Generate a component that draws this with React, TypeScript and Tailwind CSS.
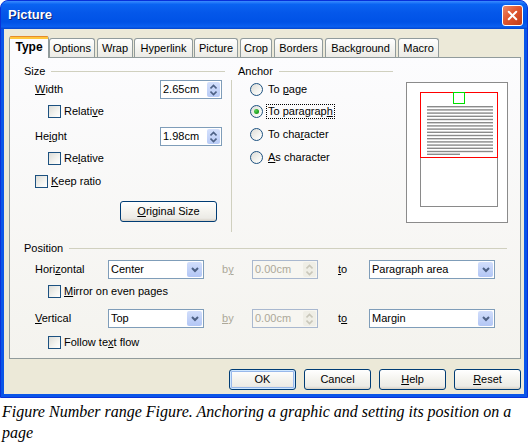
import type { ReactNode } from "react"
import { X } from "lucide-react"

const U = ({ children }: { children: ReactNode }) => <span className="underline underline-offset-[1px]">{children}</span>

function Checkbox({ label }: { label: ReactNode }) {
  return (
    <div className="flex h-[13px] items-center">
      <span className="h-[13px] w-[13px] border border-[#1c5180] bg-[linear-gradient(135deg,#dcdcd7_0%,#f4f4f0_60%,#ffffff_100%)]" />
      <span className="ml-[3px] leading-[13px]">{label}</span>
    </div>
  )
}

function Radio({ label, checked, focus }: { label: ReactNode; checked?: boolean; focus?: boolean }) {
  return (
    <div className="flex h-[14px] items-center">
      <span className="flex h-[13px] w-[13px] items-center justify-center rounded-full border border-[#1c5180] bg-[linear-gradient(135deg,#dcdcd7_0%,#f4f4f0_60%,#ffffff_100%)]">
        {checked && <span className="h-[5px] w-[5px] rounded-full bg-[radial-gradient(circle_at_35%_35%,#55d355,#21a121_60%,#178017)]" />}
      </span>
      <span className={`ml-[3px] leading-[13px] ${focus ? "border border-dotted border-black px-[1px]" : "px-[2px]"}`}>{label}</span>
    </div>
  )
}

function SpinArrows({ disabled }: { disabled?: boolean }) {
  const c = disabled ? "#c9c7ba" : "#4d6185"
  return (
    <svg width="7" height="12" viewBox="0 0 7 12">
      <path d="M0.5 4.5 L3.5 1.5 L6.5 4.5" fill="none" stroke={c} strokeWidth="1.6" />
      <path d="M0.5 7.5 L3.5 10.5 L6.5 7.5" fill="none" stroke={c} strokeWidth="1.6" />
    </svg>
  )
}

function Spin({ value, w, disabled }: { value: string; w: string; disabled?: boolean }) {
  return (
    <div
      className={`flex h-[19px] items-stretch border ${w} ${
        disabled ? "border-[#a9b8cf] bg-[#f7f6f1] text-[#aca899]" : "border-[#7f9db9] bg-white text-black"
      }`}
    >
      <span className="flex-1 pl-[2px] leading-[17px]">{value}</span>
      <span
        className={`m-[1px] flex w-[13px] items-center justify-center rounded-[2px] ${
          disabled ? "bg-[#efeee6]" : "bg-[linear-gradient(180deg,#d4e0fc,#b8cbf6)]"
        }`}
      >
        <SpinArrows disabled={disabled} />
      </span>
    </div>
  )
}

function Dropdown({ value, w }: { value: string; w: string }) {
  return (
    <div className={`flex h-[19px] items-stretch border border-[#7f9db9] bg-white ${w}`}>
      <span className="flex-1 pl-[2px] leading-[17px]">{value}</span>
      <span className="m-[1px] flex w-[15px] items-center justify-center rounded-[2px] bg-[linear-gradient(180deg,#d2defb,#b2c6f5)]">
        <svg width="8" height="6" viewBox="0 0 8 6">
          <path d="M1 1 L4 4 L7 1" fill="none" stroke="#4d6185" strokeWidth="2" />
        </svg>
      </span>
    </div>
  )
}

function XPButton({ children, w, isDefault }: { children: ReactNode; w: string; isDefault?: boolean }) {
  return (
    <div
      className={`flex h-[21px] items-center justify-center rounded-[3px] border border-[#003c74] bg-[linear-gradient(180deg,#ffffff_0%,#f4f3ee_50%,#ecebe6_85%,#d6d0c5_100%)] ${w} ${
        isDefault ? "shadow-[inset_0_0_0_1px_#cee7ff,inset_0_0_0_2px_#98b8ea]" : ""
      }`}
    >
      {children}
    </div>
  )
}

function GroupHeader({ title, w }: { title: string; w: string }) {
  return (
    <div className={`flex h-[14px] items-center ${w}`}>
      <span className="leading-[14px]">{title}</span>
      <span className="ml-[6px] h-px flex-1 bg-[#d0d0bf]" />
    </div>
  )
}

function Tab({ label, w, active }: { label: string; w: string; active?: boolean }) {
  if (active) {
    return (
      <div
        className={`relative z-10 -mb-px flex h-[22px] flex-col rounded-t-[3px] border-x border-[#919b9c] bg-[#fcfcfe] ${w}`}
      >
        <span className="h-[1px] rounded-t-[3px] bg-[#e68b2c]" />
        <span className="h-[2px] bg-[#ffc73c]" />
        <span className="flex-1 pt-[1px] text-center text-[12px] font-bold leading-[15px]">{label}</span>
      </div>
    )
  }
  return (
    <div
      className={`flex h-[19px] items-center justify-center rounded-t-[3px] border-x border-t border-[#919b9c] bg-[linear-gradient(180deg,#ffffff,#f3f3ef_60%,#ecebe6)] ${w}`}
    >
      <span className="leading-[15px]">{label}</span>
    </div>
  )
}

function Preview() {
  const lines = Array.from({ length: 15 }, (_, i) => 23 + i * 3.2)
  return (
    <div className="h-[141px] w-[102px] border border-[#8b8b8b] bg-white">
      <svg width="100" height="139" viewBox="0 0 100 139">
        <rect x="13.5" y="9.5" width="77" height="114" fill="white" stroke="#8a8a8a" />
        {lines.map((y) => (
          <rect key={y} x="20" y={y} width="66" height="1.4" fill="#8a8a8a" />
        ))}
        <rect x="20" y="70.6" width="33" height="1.4" fill="#8a8a8a" />
        <rect x="13.5" y="9.5" width="77" height="65" fill="none" stroke="#ff0000" />
        <rect x="46.5" y="9.5" width="11" height="11" fill="white" stroke="#00e000" />
      </svg>
    </div>
  )
}

export default function App() {
  return (
    <div className="h-[445px] w-[531px] bg-white font-['Liberation_Sans',Arial,sans-serif] text-[11px] text-black">
      <div className="w-[528px] rounded-t-[8px] border border-[#0831d9] bg-[#0a55e8] px-[3px] pb-[3px]">
        {/* title bar */}
        <div className="-mx-[3px] flex h-[28px] items-center justify-between rounded-t-[7px] bg-[linear-gradient(180deg,#3a8cff_0%,#0a64f2_12%,#0558ea_40%,#0052e6_75%,#0a5ff0_92%,#0344cc_100%)] pl-[7px] pr-[4px]">
          <span className="text-[13px] font-bold text-white [text-shadow:1px_1px_0_#0a1e6e]">Picture</span>
          <span className="flex h-[21px] w-[21px] items-center justify-center rounded-[3px] border border-white bg-[linear-gradient(135deg,#ec8a6a_0%,#e0562f_45%,#c23c17_100%)]">
            <X size={15} strokeWidth={3.2} color="white" />
          </span>
        </div>

        {/* body */}
        <div className="bg-[#ece9d8] pl-[5px] pr-[3px] pt-[7px] pb-[4px]">
          <div className="flex items-end">
            <Tab label="Type" w="w-[40px]" active />
            <Tab label="Options" w="w-[46px]" />
            <div className="ml-[2px]" />
            <Tab label="Wrap" w="w-[36px]" />
            <div className="ml-[1px]" />
            <Tab label="Hyperlink" w="w-[59px]" />
            <div className="ml-[1px]" />
            <Tab label="Picture" w="w-[44px]" />
            <div className="ml-[2px]" />
            <Tab label="Crop" w="w-[32px]" />
            <div className="ml-[2px]" />
            <Tab label="Borders" w="w-[49px]" />
            <div className="ml-[2px]" />
            <Tab label="Background" w="w-[71px]" />
            <div className="ml-[2px]" />
            <Tab label="Macro" w="w-[41px]" />
          </div>

          {/* tab panel */}
          <div className="h-[302px] w-[512px] border border-[#919b9c] bg-[linear-gradient(180deg,#fcfcfe,#f4f3ee)] pl-[14px] pt-[6px]">
            <div className="flex">
              {/* size */}
              <div className="flex w-[201px] flex-col">
                <GroupHeader title="Size" w="w-[201px]" />
                <div className="mt-[2px] flex h-[19px] items-center pl-[11px]">
                  <span className="flex-1">
                    <U>W</U>idth
                  </span>
                  <Spin value="2.65cm" w="w-[62px]" />
                  <span className="w-[3px]" />
                </div>
                <div className="mt-[6px] pl-[24px]">
                  <Checkbox label={<>Relati<U>v</U>e</>} />
                </div>
                <div className="mt-[9px] flex h-[19px] items-center pl-[11px]">
                  <span className="flex-1">
                    He<U>i</U>ght
                  </span>
                  <Spin value="1.98cm" w="w-[62px]" />
                  <span className="w-[3px]" />
                </div>
                <div className="mt-[6px] pl-[24px]">
                  <Checkbox label={<>Re<U>l</U>ative</>} />
                </div>
                <div className="mt-[10px] pl-[11px]">
                  <Checkbox label={<><U>K</U>eep ratio</>} />
                </div>
                <div className="mt-[13px] pl-[96px]">
                  <XPButton w="w-[97px]">
                    <span>
                      <U>O</U>riginal Size
                    </span>
                  </XPButton>
                </div>
              </div>

              <div className="ml-[6px] mt-[16px] h-[152px] w-px bg-[#d0d0bf]" />

              {/* anchor */}
              <div className="ml-[6px] flex w-[155px] flex-col">
                <GroupHeader title="Anchor" w="w-[155px]" />
                <div className="mt-[4px] pl-[12px]">
                  <Radio label={<>To <U>p</U>age</>} />
                </div>
                <div className="mt-[8px] pl-[12px]">
                  <Radio label={<>To paragrap<U>h</U></>} checked focus />
                </div>
                <div className="mt-[9px] pl-[12px]">
                  <Radio label={<>To cha<U>r</U>acter</>} />
                </div>
                <div className="mt-[9px] pl-[12px]">
                  <Radio label={<><U>A</U>s character</>} />
                </div>
              </div>

              <div className="ml-[13px] mt-[18px]">
                <Preview />
              </div>
            </div>

            {/* position */}
            <div className="mt-[9px]">
              <GroupHeader title="Position" w="w-[483px]" />
              <div className="mt-[5px] flex h-[19px] items-center pl-[11px]">
                <span className="w-[73px]">
                  Hori<U>z</U>ontal
                </span>
                <Dropdown value="Center" w="w-[96px]" />
                <span className="ml-[18px] w-[30px] text-[#aca899]">
                  b<U>y</U>
                </span>
                <Spin value="0.00cm" w="w-[66px]" disabled />
                <span className="ml-[20px] w-[31px]">
                  <U>t</U>o
                </span>
                <Dropdown value="Paragraph area" w="w-[126px]" />
              </div>
              <div className="mt-[6px] pl-[24px]">
                <Checkbox label={<><U>M</U>irror on even pages</>} />
              </div>
              <div className="mt-[11px] flex h-[19px] items-center pl-[11px]">
                <span className="w-[73px]">
                  <U>V</U>ertical
                </span>
                <Dropdown value="Top" w="w-[96px]" />
                <span className="ml-[18px] w-[30px] text-[#aca899]">
                  <U>b</U>y
                </span>
                <Spin value="0.00cm" w="w-[66px]" disabled />
                <span className="ml-[20px] w-[31px]">
                  t<U>o</U>
                </span>
                <Dropdown value="Margin" w="w-[126px]" />
              </div>
              <div className="mt-[8px] pl-[24px]">
                <Checkbox label={<>Follow te<U>x</U>t flow</>} />
              </div>
            </div>
          </div>

          {/* buttons */}
          <div className="mt-[10px] flex justify-end gap-[8px] pr-[0px]">
            <XPButton w="w-[67px]" isDefault>
              OK
            </XPButton>
            <XPButton w="w-[67px]">Cancel</XPButton>
            <XPButton w="w-[67px]">
              <span>
                <U>H</U>elp
              </span>
            </XPButton>
            <XPButton w="w-[67px]">
              <span>
                <U>R</U>eset
              </span>
            </XPButton>
          </div>
        </div>
      </div>

      <p className="mt-[3px] pl-[2px] font-['Liberation_Serif','Times_New_Roman',serif] text-[16px] italic leading-[21px]">
        Figure Number range Figure. Anchoring a graphic and setting its position on a
        <br />
        page
      </p>
    </div>
  )
}
